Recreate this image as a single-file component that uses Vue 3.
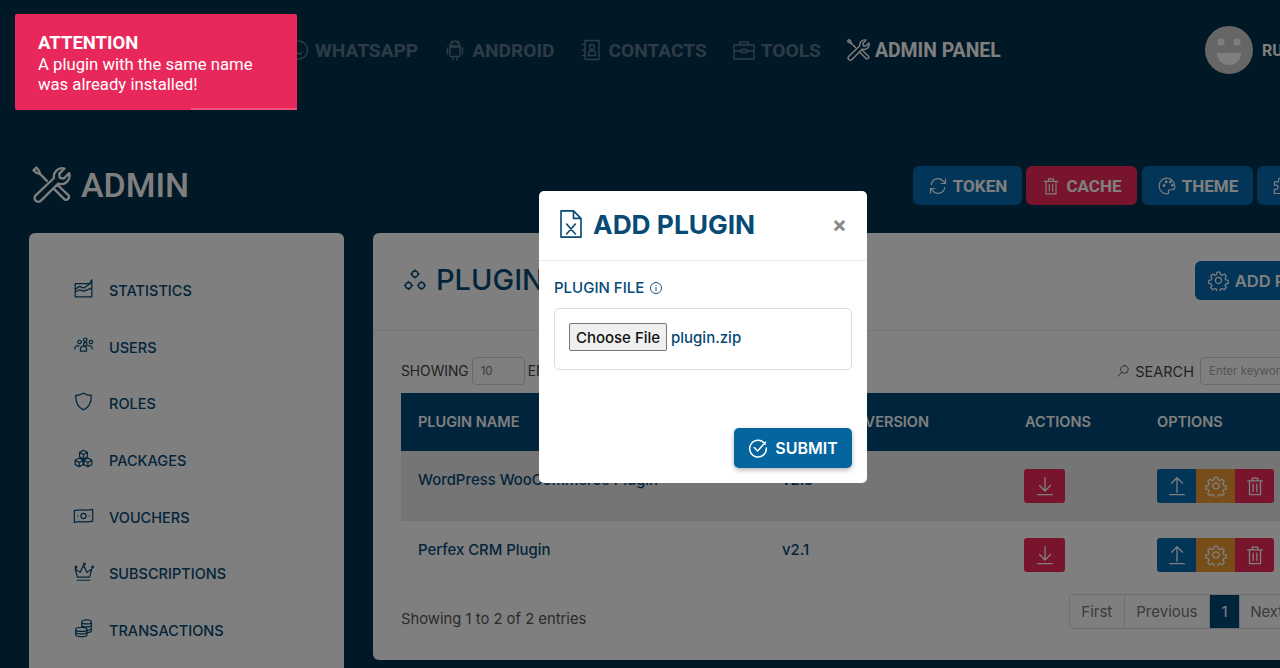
<script setup>
const icons = {
  whatsapp: "M3 21l1.6-4.6A9 9 0 1 1 7.6 19.600L3 21zM8 9.500c0 3.500 3 6.500 6.500 6.500M16 14l-2 2M8 9.500l2-1.500",
  android: "M7 9h10v8.500a1 1 0 0 1-1 1H8a1 1 0 0 1-1-1V9zM7 8a5 5 0 0 1 10 0H7zM8.500 3.500l1.500 1.800M15.500 3.500L14 5.300M4.500 10v6M19.500 10v6M10 18.500V22M14 18.500V22",
  contacts: "M6 2.500h14v19H6zM3.500 6.500H6M3.500 12H6M3.500 17.500H6M13 11.500a2.500 2.500 0 1 0 0-5 2.500 2.500 0 0 0 0 5zM9.500 17.500v-1.500a3.500 3.500 0 0 1 7 0v1.500h-7z",
  briefcase: "M2 7h20v14H2zM8 7V4h8v3M2 13h7M15 13h7M9 11.500h6v3H9z",
  tools: "M13.800 7.800a5 5 0 0 1 6.300-5.700l-3.200 3.200.4 2.400 2.400.4 3.200-3.200a5 5 0 0 1-6.600 6.200L6 21.400a2.200 2.200 0 0 1-3.200-3.200L13.800 7.800zM9.500 9.500L5.500 5.500 4.800 3.500 3.200 1.500 1.500 3.200 3.500 4.800 5.500 5.500M13.500 14l6.800 6.800a1.900 1.900 0 0 0 2.400-2.400L16 12",
  refresh: "M4 10.500a8 8 0 0 1 14.500-4L21 9V3.500M20 13.500a8 8 0 0 1-14.500 4L3 15v5.500M21 9h-5M3 15h5",
  trash: "M4 6.500h16M9 6.500V3.500h6v3M6 6.500h12v15H6zM10 10v8M14 10v8",
  palette: "M12 2.500a9.500 9.500 0 0 0 0 19c1.600 0 2.200-1.100 1.800-2.300-.5-1.500.3-2.700 1.900-2.700h2.300c2 0 3.500-1.500 3.500-3.500 0-6-4.500-10.500-9.500-10.500zM7.500 11.500a1 1 0 1 0 0-.1zM10 7a1 1 0 1 0 0-.1zM15 7a1 1 0 1 0 0-.1zM17.500 11a1 1 0 1 0 0-.1z",
  gear: "M10.300 2.500h3.400l.6 2.800 1.900.8 2.400-1.500 2.400 2.400-1.500 2.400.8 1.900 2.700.6v3.400l-2.700.6-.8 1.900 1.500 2.400-2.400 2.400-2.400-1.500-1.900.8-.6 2.700h-3.400l-.6-2.700-1.900-.8-2.400 1.500-2.400-2.400 1.500-2.400-.8-1.900-2.800-.6v-3.400l2.800-.6.8-1.900-1.500-2.400 2.400-2.400 2.400 1.500 1.900-.8zM12 8.500a3.500 3.500 0 1 0 0 7 3.500 3.500 0 0 0 0-7z",
  chart: "M2.500 6.500h19v15h-19zM2.500 13l5-3.500 5 2 5.500-4 3.500-5.500V8M2.500 16l5-2.500 5 1.500 9-3.500",
  users: "M12 5.500a2 2 0 1 0 0-.1zM5.500 8a2 2 0 1 0 0-.1zM18.500 8a2 2 0 1 0 0-.1zM8.500 16.500c0-5 7-5 7 0v2h-7zM2 16c0-3.500 3-4.500 5-3.500M22 16c0-3.500-3-4.500-5-3.500M12 10.500a2 2 0 1 0 0-.1z",
  shield: "M12 2.500c3 1.800 6 2.500 9 2.500 0 8-2 13.500-9 16.500C5 18.500 3 13 3 5c3 0 6-.7 9-2.500z",
  boxes: "M12 2.500l4.500 2.500v5L12 12.500 7.500 10V5zM7.500 5l4.500 2.500L16.500 5M12 7.500v5M7 11.500l4.500 2.500v5L7 21.500 2.500 19v-5zM2.500 14L7 16.500 11.500 14M7 16.500v5M17 11.500l4.500 2.500v5L17 21.500 12.500 19v-5zM12.500 14l4.500 2.500 4.500-2.500M17 16.500v5",
  money: "M1.500 6.500c7-2.500 14 1 21-1.500v13.500c-7 2.500-14-1-21 1.500zM12 9.500a3 3 0 1 0 0 6 3 3 0 0 0 0-6zM5.500 12.500h.1M18.500 12.500h.1",
  crown: "M5 18.500L2.500 9l5.500 4L12 5l4 8 5.500-4L19 18.500zM5 22h14M2.500 7a1 1 0 1 0 0-.1zM12 3.500a1 1 0 1 0 0-.1zM21.500 7a1 1 0 1 0 0-.1z",
  coins: "M10 4.500c0-3 11-3 11 0v10c0 1.500-3 2-5 2M10 4.500c0 3 11 3 11 0M10 8c0 3 11 3 11 0M10 4.500V10M21 11.500c0 1.500-2 2.500-5 2.500M3 13c0-3 13-3 13 0v6c0 3-13 3-13 0zM3 13c0 3 13 3 13 0M3 16c0 3 13 3 13 0",
  network: "M12 3a3 3 0 1 0 0 6 3 3 0 0 0 0-6zM5.500 14.500a3 3 0 1 0 0 6 3 3 0 0 0 0-6zM18.500 14.500a3 3 0 1 0 0 6 3 3 0 0 0 0-6zM12 2v1M12 9v1M9 6H8M16 6h-1M5.500 13.500v1M5.500 20.500v1M2.500 17.500h-1M9.500 17.500h-1M18.500 13.500v1M18.500 20.500v1M15.500 17.500h-1M22.500 17.500h-1",
  search: "M14.500 3a6.500 6.500 0 1 0 0 13 6.500 6.500 0 0 0 0-13zM9.800 14.200L3 21",
  download: "M12 3v14M6 11.500l6 6 6-6M4 21.500h16",
  upload: "M12 19V3M6 9l6-6 6 6M4 21.500h16",
  fileX: "M4 1.500h10l6 6v15H4zM14 1.500v6h6M8.500 12l7 8M15.500 12l-7 8",
  info: "M12 2.500a9.500 9.500 0 1 0 0 19 9.500 9.500 0 0 0 0-19zM12 11v6M12 7.500v.5",
  check: "M20.500 7.500A10 10 0 1 0 22 12M7.500 11.500l4 4L21 5",
  puzzle: "M4 7h5V5a2.500 2.500 0 0 1 5 0v2h5v5h2a2.500 2.500 0 0 1 0 5h-2v4H4v-5h2a2.500 2.500 0 0 0 0-5H4z",
};

const nav = [
  { label: "WHATSAPP", icon: "whatsapp" },
  { label: "ANDROID", icon: "android" },
  { label: "CONTACTS", icon: "contacts" },
  { label: "TOOLS", icon: "briefcase" },
  { label: "ADMIN PANEL", icon: "tools", active: true },
];

const actions = [
  { label: "TOKEN", icon: "refresh", color: "blue" },
  { label: "CACHE", icon: "trash", color: "red" },
  { label: "THEME", icon: "palette", color: "blue" },
  { label: "BUILDER", icon: "puzzle", color: "blue" },
];

const sidebar = [
  { label: "STATISTICS", icon: "chart" },
  { label: "USERS", icon: "users" },
  { label: "ROLES", icon: "shield" },
  { label: "PACKAGES", icon: "boxes" },
  { label: "VOUCHERS", icon: "money" },
  { label: "SUBSCRIPTIONS", icon: "crown" },
  { label: "TRANSACTIONS", icon: "coins" },
];

const plugins = [
  { name: "WordPress WooCommerce Plugin", version: "v2.3" },
  { name: "Perfex CRM Plugin", version: "v2.1" },
];

const pages = ["First", "Previous", "1", "Next", "Last"];
</script>

<template>
  <div class="page">
    <header class="topbar">
      <nav class="nav">
        <a v-for="item in nav" :key="item.label" class="nav-item" :class="{ active: item.active }">
          <svg class="ico" viewBox="0 0 24 24"><path :d="icons[item.icon]" /></svg>
          {{ item.label }}
        </a>
      </nav>
      <div class="user">
        <svg class="avatar" viewBox="0 0 48 48">
          <circle cx="24" cy="24" r="24" fill="#cdcdcd" />
          <circle cx="16" cy="16" r="3.500" fill="#fff" />
          <circle cx="32" cy="16" r="3.500" fill="#fff" />
          <path d="M12 27h24c0 7-5 12-12 12s-12-5-12-12z" fill="#fff" />
        </svg>
        <span>RUBEN</span>
      </div>
    </header>

    <section class="title-row">
      <h1>
        <svg class="ico" viewBox="0 0 24 24"><path :d="icons.tools" /></svg>
        ADMIN
      </h1>
      <div class="actions">
        <button v-for="a in actions" :key="a.label" class="act" :class="a.color">
          <svg class="ico" viewBox="0 0 24 24"><path :d="icons[a.icon]" /></svg>
          {{ a.label }}
        </button>
      </div>
    </section>

    <div class="columns">
      <aside class="side">
        <a v-for="item in sidebar" :key="item.label" class="side-item">
          <svg class="ico" viewBox="0 0 24 24"><path :d="icons[item.icon]" /></svg>
          <span>{{ item.label }}</span>
        </a>
      </aside>

      <main class="panel">
        <div class="panel-head">
          <h2>
            <svg class="ico" viewBox="0 0 24 24"><path :d="icons.network" /></svg>
            PLUGINS
          </h2>
          <button class="add">
            <svg class="ico" viewBox="0 0 24 24"><path :d="icons.gear" /></svg>
            ADD PLUGIN
          </button>
        </div>

        <div class="panel-body">
          <div class="tools">
            <div class="showing">
              SHOWING <span class="fake-input small">10</span> ENTRIES
            </div>
            <div class="search">
              <svg class="ico" viewBox="0 0 24 24"><path :d="icons.search" /></svg>
              SEARCH <span class="fake-input wide">Enter keyword</span>
            </div>
          </div>

          <table>
            <thead>
              <tr>
                <th class="c-name">PLUGIN NAME</th>
                <th class="c-ver">INSTALLED VERSION</th>
                <th class="c-act">ACTIONS</th>
                <th>OPTIONS</th>
              </tr>
            </thead>
            <tbody>
              <tr v-for="p in plugins" :key="p.name">
                <td class="name">{{ p.name }}</td>
                <td class="name">{{ p.version }}</td>
                <td>
                  <button class="tbtn red single">
                    <svg class="ico" viewBox="0 0 24 24"><path :d="icons.download" /></svg>
                  </button>
                </td>
                <td>
                  <div class="group">
                    <button class="tbtn blue">
                      <svg class="ico" viewBox="0 0 24 24"><path :d="icons.upload" /></svg>
                    </button>
                    <button class="tbtn orange">
                      <svg class="ico" viewBox="0 0 24 24"><path :d="icons.gear" /></svg>
                    </button>
                    <button class="tbtn red">
                      <svg class="ico" viewBox="0 0 24 24"><path :d="icons.trash" /></svg>
                    </button>
                  </div>
                </td>
              </tr>
            </tbody>
          </table>

          <div class="foot">
            <span>Showing 1 to 2 of 2 entries</span>
            <div class="pager">
              <a v-for="p in pages" :key="p" :class="{ current: p === '1' }">{{ p }}</a>
            </div>
          </div>
        </div>
      </main>
    </div>

    <div class="backdrop">
      <div class="modal">
        <div class="modal-head">
          <svg class="ico" viewBox="0 0 24 24"><path :d="icons.fileX" /></svg>
          <h3>ADD PLUGIN</h3>
          <span class="close">×</span>
        </div>
        <div class="modal-body">
          <label class="lbl">
            PLUGIN FILE
            <svg class="ico" viewBox="0 0 24 24"><path :d="icons.info" /></svg>
          </label>
          <div class="filebox">
            <button class="choose">Choose File</button>
            <span>plugin.zip</span>
          </div>
          <div class="modal-foot">
            <button class="submit">
              <svg class="ico" viewBox="0 0 24 24"><path :d="icons.check" /></svg>
              SUBMIT
            </button>
          </div>
        </div>
      </div>
    </div>

    <div class="toast">
      <strong>ATTENTION</strong>
      <p>A plugin with the same name was already installed!</p>
      <i class="progress"></i>
    </div>
  </div>
</template>

<style>
html,
body {
  margin: 0;
  overflow: hidden;
}
</style>

<style scoped>
.page {
  position: relative;
  width: 1406px;
  height: 668px;
  overflow: hidden;
  background: #02304d;
  font-family: Inter, "Liberation Sans", sans-serif;
  color: #074a76;
}
.ico {
  fill: none;
  stroke: currentColor;
  stroke-width: 1.4;
  stroke-linecap: round;
  stroke-linejoin: round;
  flex: none;
}
button {
  border: 0;
  font-family: inherit;
}

.topbar {
  height: 100px;
  display: flex;
  align-items: center;
  justify-content: space-between;
  padding: 0 29px 0 286px;
}
.nav {
  display: flex;
  gap: 25px;
}
.nav-item {
  display: flex;
  align-items: center;
  gap: 5px;
  font-family: Roboto, sans-serif;
  font-weight: 700;
  font-size: 19.15px;
  color: rgba(255, 255, 255, 0.36);
}
.nav-item .ico {
  width: 24px;
  height: 24px;
}
.nav-item.active {
  color: #fff;
  font-size: 19.4px;
}
.user {
  display: flex;
  align-items: center;
  gap: 9px;
  width: 172px;
  font-family: Roboto, sans-serif;
  font-weight: 700;
  font-size: 16px;
  color: #fff;
}
.avatar {
  width: 48px;
  height: 48px;
}

.title-row {
  height: 133px;
  padding: 0 29px 0 31px;
  display: flex;
  align-items: flex-start;
  justify-content: space-between;
}
h1 {
  margin: 62px 0 0;
  display: flex;
  align-items: center;
  gap: 10px;
  font-family: Roboto, sans-serif;
  font-weight: 500;
  font-size: 34px;
  line-height: 46px;
  color: #fff;
}
h1 .ico {
  width: 40px;
  height: 40px;
}
.actions {
  display: flex;
  gap: 4px;
  margin-top: 66px;
}
.act {
  height: 39px;
  width: 111px;
  padding: 0;
  display: flex;
  align-items: center;
  justify-content: center;
  gap: 5px;
  border-radius: 6px;
  font-family: Roboto, sans-serif;
  font-weight: 700;
  font-size: 17px;
  color: #fff;
}
.act:nth-child(1) {
  width: 109px;
}
.act:nth-child(2) {
  margin-right: 1px;
}
.act:nth-child(4) {
  width: 120px;
}
.act .ico {
  width: 20px;
  height: 20px;
}
.act.blue,
.tbtn.blue,
.add {
  background: #056ab0;
}
.act.red,
.tbtn.red {
  background: #f12a5b;
}

.columns {
  display: grid;
  grid-template-columns: 315px 1004px;
  gap: 29px;
  padding-left: 29px;
}
.side {
  height: 500px;
  background: #fff;
  border-radius: 6px;
  padding: 30px 45px;
  box-sizing: border-box;
}
.side-item {
  height: 56.7px;
  display: flex;
  align-items: flex-start;
  gap: 15px;
  font-weight: 500;
  font-size: 14.5px;
  line-height: 18px;
}
.side-item span {
  padding-top: 19px;
  color: #074a76;
}
.side-item .ico {
  width: 21px;
  height: 21px;
  margin: 15px 0 0 -1px;
}

.panel {
  height: 427px;
  background: #fff;
  border-radius: 6px;
}
.panel-head {
  height: 97px;
  padding: 0 28px 0 30px;
  display: flex;
  align-items: center;
  justify-content: space-between;
  border-bottom: 1px solid #e6e6e6;
}
h2 {
  margin: 0 0 4px;
  display: flex;
  align-items: center;
  gap: 9px;
  font-weight: 500;
  font-size: 29px;
}
h2 .ico {
  width: 24px;
  height: 24px;
}
.add {
  height: 39px;
  width: 154px;
  margin-bottom: 2px;
  padding: 0;
  display: flex;
  align-items: center;
  justify-content: center;
  gap: 6px;
  border-radius: 6px;
  font-weight: 600;
  font-size: 16.5px;
  color: #fff;
}
.add .ico {
  width: 21px;
  height: 21px;
}
.panel-body {
  padding: 0 28px;
}
.tools {
  height: 62px;
  padding: 26px 0 8px;
  box-sizing: border-box;
  display: flex;
  align-items: center;
  justify-content: space-between;
  font-size: 14.5px;
  color: #444;
}
.showing,
.search {
  display: flex;
  align-items: center;
  gap: 3px;
}
.showing {
  font-size: 13.8px;
}
.search {
  gap: 5px;
}
.search .ico {
  width: 14px;
  height: 14px;
}
.fake-input {
  box-sizing: border-box;
  height: 28px;
  display: flex;
  align-items: center;
  padding-left: 8px;
  border: 1px solid #d4d4d4;
  border-radius: 4px;
  font-size: 11.5px;
  color: #777;
}
.fake-input.small {
  width: 53px;
}
.fake-input.wide {
  width: 149px;
  margin-left: 1px;
  color: #aaa;
}

table {
  width: 948px;
  table-layout: fixed;
  border-collapse: collapse;
  font-size: 14.9px;
}
th {
  height: 58px;
  padding: 0 17px 2px;
  box-sizing: border-box;
  background: #004876;
  text-align: left;
  font-weight: 600;
  font-size: 14.5px;
  color: #fff;
  white-space: nowrap;
}
.c-name {
  width: 364px;
}
.c-ver {
  width: 243px;
}
.c-act {
  width: 132px;
}
td {
  height: 69px;
  padding: 0 17px;
  box-sizing: border-box;
  border-bottom: 1px solid #e4e4e4;
  vertical-align: top;
}
tbody tr:nth-child(1) {
  background: #ebebeb;
}
tbody tr:nth-child(2) td {
  border-bottom: 0;
}
tbody tr:nth-child(2) .tbtn {
  margin-top: 17px;
}
td.name {
  padding-top: 20px;
  font-weight: 500;
  color: #074a76;
}
.tbtn {
  height: 34px;
  width: 39px;
  margin-top: 18px;
  padding: 0;
  display: flex;
  align-items: center;
  justify-content: center;
  color: #fff;
}
.tbtn .ico {
  width: 22px;
  height: 22px;
}
.tbtn.single {
  width: 41px;
  margin-left: -1px;
  border-radius: 3px;
}
.group {
  display: flex;
}
.group .tbtn:first-child {
  border-radius: 3px 0 0 3px;
}
.group .tbtn:last-child {
  border-radius: 0 3px 3px 0;
}
.tbtn.orange {
  background: #ee9a33;
}

.foot {
  margin-top: 5px;
  display: flex;
  justify-content: space-between;
  align-items: center;
  font-size: 14.8px;
  color: #555;
}
.foot > span {
  padding-top: 14px;
}
.pager {
  display: flex;
  height: 35px;
  border: 1px solid #ddd;
  border-radius: 4px;
  box-sizing: border-box;
  font-size: 15px;
  color: #777;
}
.pager a {
  padding: 0 11.5px;
  display: flex;
  align-items: center;
  border-left: 1px solid #ddd;
}
.pager a:first-child {
  border-left: 0;
}
.pager a:nth-child(4) {
  padding-left: 10px;
}
.pager a:last-child {
  padding-right: 11px;
}
.pager a.current {
  background: #004876;
  color: #fff;
}

.backdrop {
  position: absolute;
  inset: 0;
  display: flex;
  align-items: center;
  justify-content: center;
  background: rgba(0, 0, 0, 0.5);
}
.modal {
  width: 328px;
  height: 292px;
  background: #fff;
  border-radius: 5px;
  margin-top: 6px;
}
.modal-head {
  height: 69px;
  padding: 0 20px 3px 17px;
  box-sizing: content-box;
  height: 66px;
  display: flex;
  align-items: center;
  border-bottom: 1px solid #e9e9e9;
}
.modal-head .ico {
  width: 30px;
  height: 30px;
  margin-right: 7px;
  stroke-width: 1.3;
}
h3 {
  margin: 0;
  flex: 1;
  font-weight: 700;
  font-size: 26.3px;
  white-space: nowrap;
}
.close {
  font-size: 22px;
  font-weight: 700;
  color: #888;
  margin-top: -1px;
}
.modal-body {
  padding: 18px 15px;
}
.lbl {
  display: flex;
  align-items: center;
  gap: 5px;
  font-weight: 500;
  font-size: 15px;
  line-height: 18px;
}
.lbl .ico {
  width: 14px;
  height: 14px;
  stroke-width: 1.6;
}
.filebox {
  box-sizing: border-box;
  height: 62px;
  margin-top: 11px;
  padding: 0 14px 4px;
  display: flex;
  align-items: center;
  gap: 4px;
  border: 1px solid #ddd;
  border-radius: 5px;
  font-size: 15px;
  font-weight: 500;
}
.choose {
  height: 28px;
  width: 98px;
  padding: 0;
  background: #efefef;
  border: 1px solid #767676;
  border-radius: 2px;
  font-size: 15px;
  font-weight: 500;
  color: #111;
}
.modal-foot {
  margin-top: 58px;
  display: flex;
  justify-content: flex-end;
}
.submit {
  height: 40px;
  width: 118px;
  display: flex;
  align-items: center;
  justify-content: center;
  gap: 7px;
  padding: 0;
  background: #05669f;
  border-radius: 5px;
  box-shadow: 0 2px 5px rgba(0, 0, 0, 0.3);
  font-weight: 600;
  font-size: 16px;
  color: #fff;
}
.submit .ico {
  width: 20px;
  height: 20px;
  stroke-width: 1.8;
}

.toast {
  position: absolute;
  left: 15px;
  top: 14px;
  width: 282px;
  height: 96px;
  box-sizing: border-box;
  padding: 18px 23px;
  background: #e8285a;
  border-radius: 2px;
  color: #fff;
  font-family: Roboto, sans-serif;
  font-size: 16.7px;
  line-height: 20px;
}
.toast strong {
  display: block;
  font-size: 18.500px;
  line-height: 23px;
}
.toast p {
  margin: 0;
}
.progress {
  position: absolute;
  left: 176px;
  right: 0;
  bottom: 0;
  height: 2px;
  background: #f0527a;
}
</style>
